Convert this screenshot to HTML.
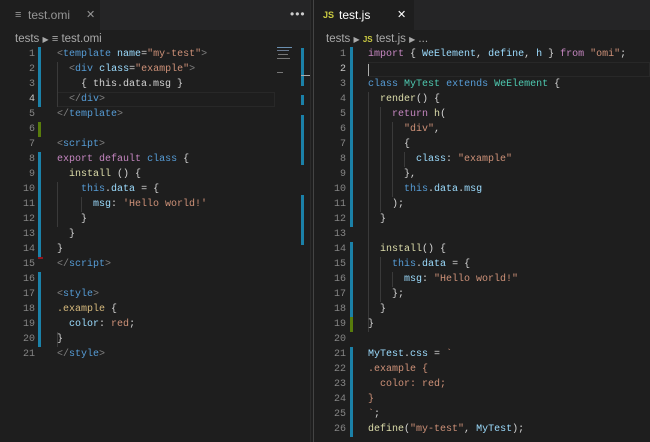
<!DOCTYPE html>
<html><head><meta charset="utf-8"><style>
*{margin:0;padding:0;box-sizing:border-box}
body{width:650px;height:442px;background:#1e1e1e;overflow:hidden;position:relative;font-family:"Liberation Sans",sans-serif}
.tabbar{position:absolute;top:0;height:30px;background:#252526}
.tab{position:absolute;top:0;height:30px;background:#1e1e1e;color:#fff;font-size:12px;line-height:30px}
.crumb{position:absolute;top:31px;font-size:11.5px;color:#a9a9a9;line-height:16px}
.ln{position:absolute;width:30px;text-align:right;font-family:"Liberation Mono",monospace;font-size:10px;color:#858585;line-height:15px;height:15px}
.cd{position:absolute;font-family:"Liberation Mono",monospace;font-size:10px;color:#d4d4d4;line-height:15px;height:15px;white-space:pre}
.g{position:absolute;width:3px}
.b{background:#1b81a8}.gr{background:#587c0c}
.t{color:#569cd6}.p{color:#808080}.a{color:#9cdcfe}.s{color:#ce9178}.k{color:#c586c0}.f{color:#dcdcaa}.c{color:#4ec9b0}.y{color:#d7ba7d}
.ig{position:absolute;width:1px;background:#3a3a3a}
</style></head><body>
<div class="tabbar" style="left:0;width:313px"></div>
<div class="tabbar" style="left:314px;width:336px"></div>
<div style="position:absolute;left:313px;top:0;width:1px;height:442px;background:#444"></div>
<div class="tab" style="left:0;width:100px;color:#969696"><span style="position:absolute;left:15px;font-size:11px">&#8801;</span><span style="position:absolute;left:28px">test.omi</span><span style="position:absolute;left:86px;font-size:11px">✕</span></div>
<div style="position:absolute;left:290px;top:7px;color:#ccc;font-size:12px;letter-spacing:1px">•••</div>
<div class="tab" style="left:314px;width:100px"><span style="position:absolute;left:9px;font-size:9px;font-weight:bold;color:#cbcb41">JS</span><span style="position:absolute;left:25px">test.js</span><span style="position:absolute;left:83px;font-size:11px">✕</span></div>
<div class="crumb" style="left:15px">tests <span style="font-size:8px">▶</span> <span style="font-size:11px">&#8801;</span> test.omi</div>
<div class="crumb" style="left:326px">tests <span style="font-size:8px">▶</span> <span style="font-size:8px;font-weight:bold;color:#cbcb41">JS</span> test.js <span style="font-size:8px">▶</span> ...</div>

<!-- left minimap / ruler -->
<div style="position:absolute;left:277px;top:47px;width:15px;height:1px;background:#6a8fb0"></div>
<div style="position:absolute;left:277px;top:50px;width:12px;height:1px;background:#6a7a90"></div>
<div style="position:absolute;left:278px;top:54px;width:10px;height:1px;background:#777"></div>
<div style="position:absolute;left:277px;top:58px;width:13px;height:1px;background:#777"></div>
<div style="position:absolute;left:277px;top:72px;width:6px;height:1px;background:#777"></div>
<div style="position:absolute;left:301px;top:48px;width:3px;height:38px;background:#1b81a8"></div>
<div style="position:absolute;left:301px;top:95px;width:3px;height:10px;background:#1b81a8"></div>
<div style="position:absolute;left:301px;top:115px;width:3px;height:50px;background:#1b81a8"></div>
<div style="position:absolute;left:301px;top:195px;width:3px;height:50px;background:#1b81a8"></div>
<div style="position:absolute;left:301px;top:75px;width:12px;height:1px;background:#aaa"></div>
<div style="position:absolute;left:310px;top:0;width:3px;height:442px;background:#1e1e1e;border-left:1px solid #2a2a2a"></div>

<!-- current line highlights -->
<div style="position:absolute;left:57px;top:92px;width:218px;height:15px;border:1px solid #282828"></div>
<div style="position:absolute;left:368px;top:62px;width:282px;height:15px;border:1px solid #282828"></div>
<div style="position:absolute;left:368px;top:64px;width:1px;height:12px;background:#aeafad"></div>

<!-- indent guides -->
<div class="ig" style="left:57px;top:62px;height:45px"></div>
<div class="ig" style="left:57px;top:182px;height:45px"></div>
<div class="ig" style="left:81px;top:197px;height:15px"></div>
<div class="ig" style="left:57px;top:332px;height:15px"></div>
<div class="ig" style="left:368px;top:92px;height:240px"></div>
<div class="ig" style="left:380px;top:107px;height:105px"></div>
<div class="ig" style="left:392px;top:122px;height:75px"></div>
<div class="ig" style="left:404px;top:152px;height:15px"></div>
<div class="ig" style="left:380px;top:257px;height:45px"></div>
<div class="ig" style="left:392px;top:272px;height:15px"></div>

<!-- left gutter -->
<div class="g b" style="left:38px;top:47px;height:60px"></div>
<div class="g gr" style="left:38px;top:122px;height:15px"></div>
<div class="g b" style="left:38px;top:152px;height:105px"></div>
<div style="position:absolute;left:38px;top:257px;width:5px;height:2px;background:#94151b"></div>
<div class="g b" style="left:38px;top:272px;height:75px"></div>
<!-- right gutter -->
<div class="g b" style="left:350px;top:47px;height:180px"></div>
<div class="g b" style="left:350px;top:242px;height:75px"></div>
<div class="g gr" style="left:350px;top:317px;height:15px"></div>
<div class="g b" style="left:350px;top:347px;height:90px"></div>

<!-- left code -->
<div class="ln" style="left:5px;top:47px">1</div><div class="cd" style="left:57px;top:47px"><span class="p">&lt;</span><span class="t">template</span> <span class="a">name</span>=<span class="s">"my-test"</span><span class="p">&gt;</span></div>
<div class="ln" style="left:5px;top:62px">2</div><div class="cd" style="left:57px;top:62px">  <span class="p">&lt;</span><span class="t">div</span> <span class="a">class</span>=<span class="s">"example"</span><span class="p">&gt;</span></div>
<div class="ln" style="left:5px;top:77px">3</div><div class="cd" style="left:57px;top:77px">    { this.data.msg }</div>
<div class="ln" style="left:5px;top:92px;color:#c6c6c6">4</div><div class="cd" style="left:57px;top:92px">  <span class="p">&lt;/</span><span class="t">div</span><span class="p">&gt;</span></div>
<div class="ln" style="left:5px;top:107px">5</div><div class="cd" style="left:57px;top:107px"><span class="p">&lt;/</span><span class="t">template</span><span class="p">&gt;</span></div>
<div class="ln" style="left:5px;top:122px">6</div>
<div class="ln" style="left:5px;top:137px">7</div><div class="cd" style="left:57px;top:137px"><span class="p">&lt;</span><span class="t">script</span><span class="p">&gt;</span></div>
<div class="ln" style="left:5px;top:152px">8</div><div class="cd" style="left:57px;top:152px"><span class="k">export</span> <span class="k">default</span> <span class="t">class</span> {</div>
<div class="ln" style="left:5px;top:167px">9</div><div class="cd" style="left:57px;top:167px">  <span class="f">install</span> () {</div>
<div class="ln" style="left:5px;top:182px">10</div><div class="cd" style="left:57px;top:182px">    <span class="t">this</span>.<span class="a">data</span> = {</div>
<div class="ln" style="left:5px;top:197px">11</div><div class="cd" style="left:57px;top:197px">      <span class="a">msg</span>: <span class="s">'Hello world!'</span></div>
<div class="ln" style="left:5px;top:212px">12</div><div class="cd" style="left:57px;top:212px">    }</div>
<div class="ln" style="left:5px;top:227px">13</div><div class="cd" style="left:57px;top:227px">  }</div>
<div class="ln" style="left:5px;top:242px">14</div><div class="cd" style="left:57px;top:242px">}</div>
<div class="ln" style="left:5px;top:257px">15</div><div class="cd" style="left:57px;top:257px"><span class="p">&lt;/</span><span class="t">script</span><span class="p">&gt;</span></div>
<div class="ln" style="left:5px;top:272px">16</div>
<div class="ln" style="left:5px;top:287px">17</div><div class="cd" style="left:57px;top:287px"><span class="p">&lt;</span><span class="t">style</span><span class="p">&gt;</span></div>
<div class="ln" style="left:5px;top:302px">18</div><div class="cd" style="left:57px;top:302px"><span class="y">.example</span> {</div>
<div class="ln" style="left:5px;top:317px">19</div><div class="cd" style="left:57px;top:317px">  <span class="a">color</span>: <span class="s">red</span>;</div>
<div class="ln" style="left:5px;top:332px">20</div><div class="cd" style="left:57px;top:332px">}</div>
<div class="ln" style="left:5px;top:347px">21</div><div class="cd" style="left:57px;top:347px"><span class="p">&lt;/</span><span class="t">style</span><span class="p">&gt;</span></div>

<!-- right code -->
<div class="ln" style="left:316px;top:47px">1</div><div class="cd" style="left:368px;top:47px"><span class="k">import</span> { <span class="a">WeElement</span>, <span class="a">define</span>, <span class="a">h</span> } <span class="k">from</span> <span class="s">"omi"</span>;</div>
<div class="ln" style="left:316px;top:62px;color:#c6c6c6">2</div>
<div class="ln" style="left:316px;top:77px">3</div><div class="cd" style="left:368px;top:77px"><span class="t">class</span> <span class="c">MyTest</span> <span class="t">extends</span> <span class="c">WeElement</span> {</div>
<div class="ln" style="left:316px;top:92px">4</div><div class="cd" style="left:368px;top:92px">  <span class="f">render</span>() {</div>
<div class="ln" style="left:316px;top:107px">5</div><div class="cd" style="left:368px;top:107px">    <span class="k">return</span> <span class="f">h</span>(</div>
<div class="ln" style="left:316px;top:122px">6</div><div class="cd" style="left:368px;top:122px">      <span class="s">"div"</span>,</div>
<div class="ln" style="left:316px;top:137px">7</div><div class="cd" style="left:368px;top:137px">      {</div>
<div class="ln" style="left:316px;top:152px">8</div><div class="cd" style="left:368px;top:152px">        <span class="a">class</span>: <span class="s">"example"</span></div>
<div class="ln" style="left:316px;top:167px">9</div><div class="cd" style="left:368px;top:167px">      },</div>
<div class="ln" style="left:316px;top:182px">10</div><div class="cd" style="left:368px;top:182px">      <span class="t">this</span>.<span class="a">data</span>.<span class="a">msg</span></div>
<div class="ln" style="left:316px;top:197px">11</div><div class="cd" style="left:368px;top:197px">    );</div>
<div class="ln" style="left:316px;top:212px">12</div><div class="cd" style="left:368px;top:212px">  }</div>
<div class="ln" style="left:316px;top:227px">13</div>
<div class="ln" style="left:316px;top:242px">14</div><div class="cd" style="left:368px;top:242px">  <span class="f">install</span>() {</div>
<div class="ln" style="left:316px;top:257px">15</div><div class="cd" style="left:368px;top:257px">    <span class="t">this</span>.<span class="a">data</span> = {</div>
<div class="ln" style="left:316px;top:272px">16</div><div class="cd" style="left:368px;top:272px">      <span class="a">msg</span>: <span class="s">"Hello world!"</span></div>
<div class="ln" style="left:316px;top:287px">17</div><div class="cd" style="left:368px;top:287px">    };</div>
<div class="ln" style="left:316px;top:302px">18</div><div class="cd" style="left:368px;top:302px">  }</div>
<div class="ln" style="left:316px;top:317px">19</div><div class="cd" style="left:368px;top:317px">}</div>
<div class="ln" style="left:316px;top:332px">20</div>
<div class="ln" style="left:316px;top:347px">21</div><div class="cd" style="left:368px;top:347px"><span class="a">MyTest</span>.<span class="a">css</span> = <span class="s">`</span></div>
<div class="ln" style="left:316px;top:362px">22</div><div class="cd" style="left:368px;top:362px"><span class="s">.example {</span></div>
<div class="ln" style="left:316px;top:377px">23</div><div class="cd" style="left:368px;top:377px"><span class="s">  color: red;</span></div>
<div class="ln" style="left:316px;top:392px">24</div><div class="cd" style="left:368px;top:392px"><span class="s">}</span></div>
<div class="ln" style="left:316px;top:407px">25</div><div class="cd" style="left:368px;top:407px"><span class="s">`</span>;</div>
<div class="ln" style="left:316px;top:422px">26</div><div class="cd" style="left:368px;top:422px"><span class="f">define</span>(<span class="s">"my-test"</span>, <span class="a">MyTest</span>);</div>
</body></html>
